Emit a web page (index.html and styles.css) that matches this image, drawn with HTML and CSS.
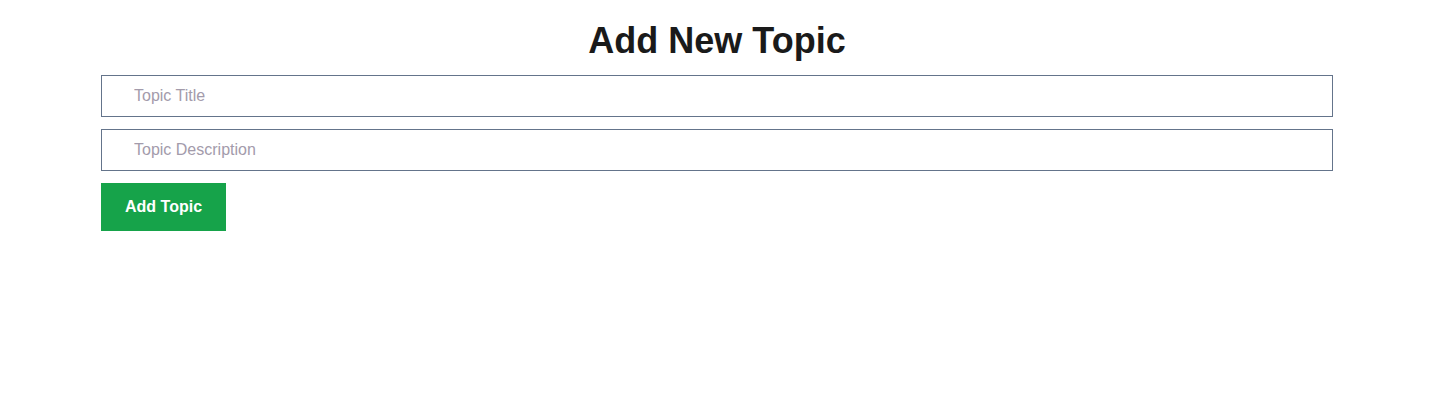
FILE: index.html
```html
<!DOCTYPE html>
<html>
<head>
<meta charset="utf-8">
<link rel="stylesheet" href="styles.css">
</head>
<body>
<main class="page">
  <h1 class="title">Add New Topic</h1>
  <form class="topic-form">
    <input class="field" type="text" placeholder="Topic Title">
    <input class="field" type="text" placeholder="Topic Description">
    <button class="submit" type="button">Add Topic</button>
  </form>
</main>
</body>
</html>
```

FILE: styles.css
```css
* { box-sizing: border-box; }
html, body { margin: 0; padding: 0; background: #fff; }
body { font-family: "Liberation Sans", Arial, sans-serif; color: #111; }
.page {
  width: 1232px;
  margin-left: 101px;
  padding-top: 21px;
}
.title {
  margin: 0 0 14px;
  font-size: 36px;
  line-height: 40px;
  font-weight: 700;
  text-align: center;
  color: #1a1a1a;
}
.topic-form {
  display: flex;
  flex-direction: column;
  align-items: flex-start;
  gap: 12px;
}
.field {
  width: 100%;
  height: 42px;
  margin: 0;
  padding: 8px 32px;
  border: 1px solid #64748b;
  border-radius: 0;
  font-family: "Liberation Sans", Arial, sans-serif;
  font-size: 16px;
  line-height: 24px;
  color: #111;
  outline: none;
}
.field::placeholder { color: #a39bab; opacity: 1; }
.submit {
  margin: 0;
  height: 48px;
  padding: 12px 24px;
  border: 0;
  border-radius: 0;
  background: #16a34a;
  color: #fff;
  font-family: "Liberation Sans", Arial, sans-serif;
  font-size: 16px;
  line-height: 24px;
  font-weight: 700;
}
```
